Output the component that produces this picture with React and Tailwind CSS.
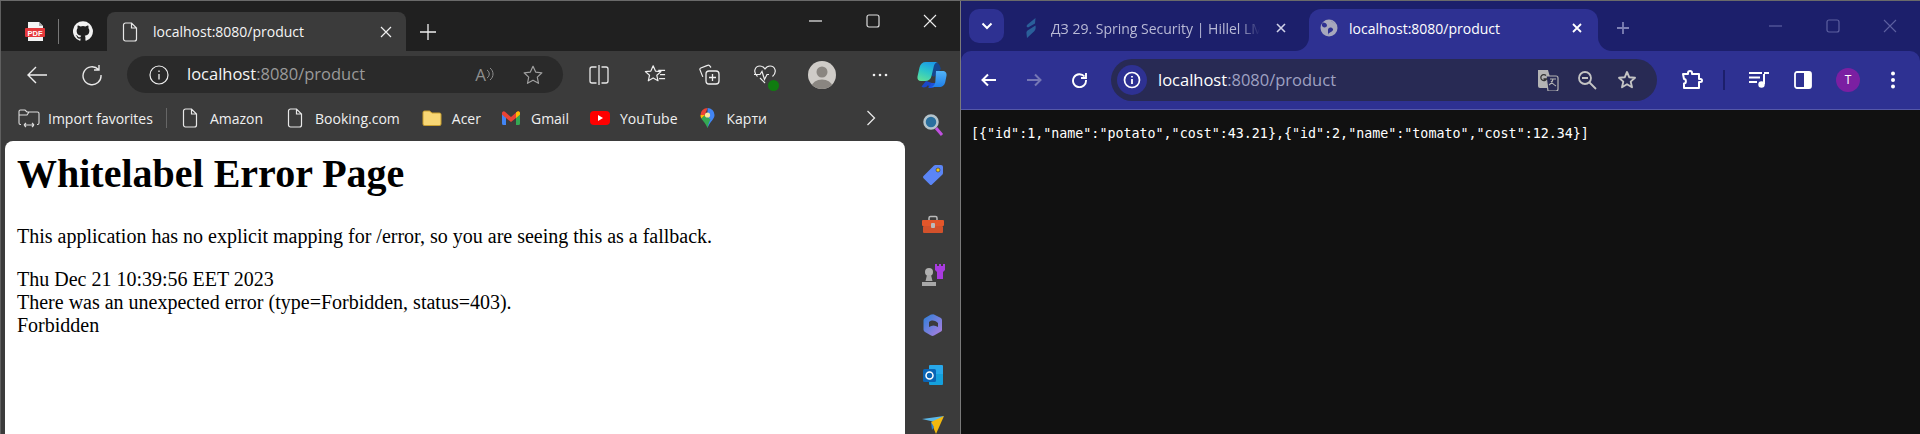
import React from "react";

const ui = { fontFamily: '"Open Sans", "Noto Sans", sans-serif' };

const S = ({ w = 20, h = 20, vb, className = "", children }) => (
  <svg width={w} height={h} viewBox={vb || `0 0 ${w} ${h}`} fill="none" className={"shrink-0 " + className}>{children}</svg>
);

const PageIcon = ({ c = "#e8e8e8" }) => (
  <S w={16} h={20}><path d="M1.500 3a2 2 0 0 1 2-2h6l5 5v11a2 2 0 0 1-2 2h-9a2 2 0 0 1-2-2z M9.500 1v5h5" stroke={c} strokeWidth="1.200" /></S>
);

const GmailIcon = () => (
  <S w={18} h={14}>
    <path d="M0 3v9.500A1.500 1.500 0 0 0 1.500 14H4V6z" fill="#4285f4" />
    <path d="M18 3v9.500a1.500 1.500 0 0 1-1.500 1.500H14V6z" fill="#34a853" />
    <path d="M4 7 0 3.500V2a1.800 1.800 0 0 1 3-1.200L9 6l6-5.200A1.800 1.800 0 0 1 18 2v1.500L14 7l-5 4z" fill="#ea4335" />
    <path d="M14 1.600 15 .8A1.800 1.800 0 0 1 18 2v1.500L14 7z" fill="#fbbc04" />
  </S>
);

const MapsIcon = () => (
  <S w={15} h={20}>
    <path d="M7.500 0A7 7 0 0 1 14.500 7c0 4-4 6-7 13z" fill="#4285f4" />
    <path d="M7.500 20C5.500 15 2.800 13 1.300 10.500L5 7l5.500 4.500C9.500 13.500 8.300 16 7.500 20z" fill="#34a853" />
    <path d="M1.300 10.500A7 7 0 0 1 .5 7L5 7z" fill="#fbbc04" />
    <path d="M.5 7A7 7 0 0 1 7.500 0L5 7z" fill="#ea4335" />
    <circle cx="7.500" cy="7" r="2.600" fill="#fbe6a0" />
  </S>
);

const Bookmark = ({ icon, label, gap = "gap-3", className = "" }) => (
  <div className={`flex items-center ${gap} ${className}`}>
    {icon}
    <span className="text-[14px] text-[#f0f0f0] whitespace-nowrap">{label}</span>
  </div>
);

const SideIcon = ({ children }) => <div className="h-[50px] flex items-center justify-center">{children}</div>;

function EdgeWindow() {
  return (
    <div className="w-[960px] h-[433px] flex flex-col bg-[#3b3b3b] overflow-hidden border-l border-[#5f5f5f]" style={ui}>
      <div className="h-[50px] bg-[#202020] flex items-end shrink-0">
        <div className="h-[50px] flex items-center pl-[24px] pt-[10px]">
          <S w={20} h={19}>
            <path d="M3 0h11l4 4v15H3z" fill="#f4f4f4" />
            <path d="M14 0v4h4z" fill="#aaa" />
            <rect x="0" y="6" width="20" height="9" rx="1" fill="#e5383b" />
            <text x="10" y="13.500" textAnchor="middle" fontSize="7.500" fontWeight="700" fill="#fff" fontFamily="Liberation Sans">PDF</text>
          </S>
          <div className="w-px h-[25px] bg-[#777] ml-[13px] mr-[14px]" />
          <S w={20} h={20} vb="0 0 24 24"><path fill="#f2f2f2" d="M12 .3a12 12 0 0 0-3.800 23.400c.6.100.8-.3.800-.6v-2c-3.300.7-4-1.600-4-1.600-.5-1.400-1.300-1.800-1.300-1.800-1.100-.7.100-.7.100-.7 1.200.1 1.800 1.200 1.800 1.200 1.100 1.800 2.800 1.300 3.500 1 .1-.8.400-1.300.8-1.600-2.700-.3-5.500-1.300-5.500-5.900 0-1.300.5-2.400 1.200-3.200-.1-.3-.5-1.500.1-3.200 0 0 1-.3 3.300 1.200a11.500 11.500 0 0 1 6 0c2.300-1.500 3.300-1.200 3.300-1.200.6 1.700.2 2.900.1 3.200.8.800 1.200 1.900 1.200 3.200 0 4.600-2.800 5.600-5.500 5.900.4.400.8 1.100.8 2.200v3.300c0 .3.200.7.800.6A12 12 0 0 0 12 .3" /></S>
        </div>
        <div className="ml-[14px] w-[299px] h-[39px] bg-[#3b3b3b] rounded-t-[8px] flex items-center pl-[15px] pr-[14px]">
          <PageIcon />
          <span className="ml-[15px] text-[14px] text-[#f5f5f5] whitespace-nowrap">localhost:8080/product</span>
          <S w={12} h={12} className="ml-auto"><path d="M1 1l10 10M11 1 1 11" stroke="#f0f0f0" strokeWidth="1.200" /></S>
        </div>
        <div className="h-[50px] flex items-center pl-[13px] pt-[11px]">
          <S w={18} h={18}><path d="M9 1v16M1 9h16" stroke="#eee" strokeWidth="1.300" /></S>
        </div>
        <div className="ml-auto h-[50px] flex items-center pb-[11px] pr-[23px]">
          <S w={14} h={14}><path d="M0 7h13" stroke="#eee" strokeWidth="1.200" /></S>
          <S w={14} h={14} className="ml-[43px]"><rect x="1" y="1" width="12" height="12" rx="2" stroke="#ddd" strokeWidth="1.200" /></S>
          <S w={14} h={14} className="ml-[43px]"><path d="M1 1l12 12M13 1 1 13" stroke="#eee" strokeWidth="1.100" /></S>
        </div>
      </div>

      <div className="h-[47px] shrink-0 flex items-center pl-[25px]">
        <S w={22} h={20}><path d="M21 10H2M10 2l-8 8 8 8" stroke="#eee" strokeWidth="1.400" /></S>
        <S w={22} h={22} className="ml-[33px]"><path d="M17.500 5.500A9 9 0 1 0 20 11M18 1v5h-5" stroke="#e8e8e8" strokeWidth="1.400" /></S>
        <div className="ml-[24px] w-[436px] h-[37px] bg-[#2a2a2a] rounded-full flex items-center pl-[22px] pr-[19px]">
          <S w={20} h={20}><circle cx="10" cy="10" r="9" stroke="#eee" strokeWidth="1.200" /><path d="M10 9v5.500M10 5.500v1.500" stroke="#eee" strokeWidth="1.300" /></S>
          <span className="ml-[18px] text-[16.500px] whitespace-nowrap text-[#f5f5f5]">localhost<span className="text-[#9a9a9a]">:8080/product</span></span>
          <span className="ml-auto text-[17px] text-[#8f8f8f] leading-none">A</span>
          <S w={8} h={16} vb="0 0 8 16"><path d="M1 3c3 2 3 6 0 8M4 1c4 3 4 9 0 12" stroke="#8f8f8f" strokeWidth="1" /></S>
          <S w={22} h={22} vb="0 0 24 24" className="ml-[28px]"><path d="M12 2.500l2.900 6.300 6.800.8-5 4.700 1.300 6.800-6-3.400-6 3.400 1.300-6.800-5-4.700 6.800-.8z" stroke="#a0a0a0" strokeWidth="1.300" strokeLinejoin="round" /></S>
        </div>
        <S w={20} h={20} className="ml-[26px]"><path d="M7.500 2H3a2 2 0 0 0-2 2v12a2 2 0 0 0 2 2h4.500M12.500 2H17a2 2 0 0 1 2 2v12a2 2 0 0 1-2 2h-4.500M10 0v20" stroke="#e8e8e8" strokeWidth="1.300" /></S>
        <S w={22} h={22} vb="0 0 24 24" className="ml-[35px]"><path d="M10 2l2.500 5.700 6 .6-4.500 4 1.300 6-5.300-3.100-5.300 3.100 1.300-6-4.500-4 6-.6zM15.500 7H23M17.500 11.500H23M16.500 16H23" stroke="#eee" strokeWidth="1.300" strokeLinejoin="round" /></S>
        <S w={22} h={22} vb="0 0 22 22" className="ml-[33px]"><path d="M12 3.500l-1.500-1.800a1.500 1.500 0 0 0-2-.3L1.800 4a1.500 1.500 0 0 0-.8 1.900l2.800 7" stroke="#eee" strokeWidth="1.200" /><rect x="7" y="7" width="13" height="13" rx="3" stroke="#eee" strokeWidth="1.300" /><path d="M13.500 10v7M10 13.500h7" stroke="#eee" strokeWidth="1.300" /></S>
        <div className="ml-[33px] relative">
          <S w={22} h={22}><path d="M3.500 12.500C-1.500 8 1 2 6 2c2.500 0 4 1.500 5 3 1-1.500 2.500-3 5-3 5 0 7.500 6 2.500 10.500M0 10.500h6l2-3 2.500 8 2.500-5h2" stroke="#eee" strokeWidth="1.200" /><path d="M6 14l5 5" stroke="#eee" strokeWidth="1.200" /></S>
          <span className="absolute right-[-3px] bottom-[-5px] w-[11px] h-[11px] rounded-full bg-[#107c10]" />
        </div>
        <div className="ml-[32px] w-[28px] h-[28px] rounded-full bg-[#cfccc8] flex items-center justify-center overflow-hidden">
          <S w={28} h={28}><circle cx="14" cy="11" r="5.500" fill="#8a8681" /><ellipse cx="14" cy="25" rx="10" ry="6.500" fill="#8a8681" /></S>
        </div>
        <S w={16} h={4} className="ml-[36px]"><circle cx="2" cy="2" r="1.300" fill="#f0f0f0" /><circle cx="8" cy="2" r="1.300" fill="#f0f0f0" /><circle cx="14" cy="2" r="1.300" fill="#f0f0f0" /></S>
        <S w={30} h={28} className="ml-[29px]">
          <defs>
            <linearGradient id="cpA" x1="0.600" y1="0" x2="0.200" y2="1"><stop offset="0" stopColor="#1c9be6" /><stop offset="0.500" stopColor="#2cc6c8" /><stop offset="1" stopColor="#5fe09a" /></linearGradient>
            <linearGradient id="cpB" x1="0.500" y1="0" x2="0.500" y2="1"><stop offset="0" stopColor="#52b4f8" /><stop offset="1" stopColor="#1f7fe8" /></linearGradient>
          </defs>
          <path d="M15 3c3-2.500 6-2 7.500 1L24 8l-7 8-3-2z" fill="#16478f" />
          <path d="M11 24c-2 3-5 3-6.500 1.500L9 20l6 2 2 1c-1 2-2.500 4-4.500 4z" fill="#1b48c8" />
          <path d="M14 22h6c-1 3-3 5-6 5h-3c1.500-1 2.300-3 3-5z" fill="#1d50d8" />
          <path d="M19 10h6.500c2.800 0 4.500 2 4 4.700l-1 5C28 24 25.500 26 22 26h-8c2.500-.6 3.700-2.300 4.300-4.800z" fill="url(#cpB)" />
          <path d="M9 1h12c-2.500.5-3.800 2.200-4.300 4.800L14.500 15c-.7 3.500-3 5-6.500 5H4C1.200 20 0 18 .5 15.500l2-9C3.300 3 5.500 1 9 1z" fill="url(#cpA)" />
        </S>
      </div>

      <div className="h-[43px] shrink-0 flex pl-[17px] pt-[4px] items-start">
        <div className="flex items-center h-[32px] w-full">
          <Bookmark gap="gap-[8px]" label="Import favorites" icon={
            <S w={22} h={20}><path d="M3 16.500H2.500A1.500 1.500 0 0 1 1 15V3.500A1.500 1.500 0 0 1 2.500 2H7l2 2h10.500A1.500 1.500 0 0 1 21 5.500V15a1.500 1.500 0 0 1-1.500 1.500H19M1 7h8l2-3M6 17h10M6 17l2-2M6 17l2 2M16 17l-2-2M16 17l-2 2" stroke="#ddd" strokeWidth="1.100" /></S>
          } />
          <div className="w-px h-[20px] bg-[#666] ml-[13px] mr-[15px]" />
          <Bookmark icon={<PageIcon />} label="Amazon" />
          <Bookmark className="ml-[24px]" icon={<PageIcon />} label="Booking.com" />
          <Bookmark gap="gap-[10px]" className="ml-[22px]" label="Acer" icon={
            <S w={20} h={16}><path d="M1 2.500A1.500 1.500 0 0 1 2.500 1h5L10 3h7.500A1.500 1.500 0 0 1 19 4.500V14a1.500 1.500 0 0 1-1.500 1.500h-15A1.500 1.500 0 0 1 1 14z" fill="#f8d775" stroke="#c99f2f" /></S>
          } />
          <Bookmark gap="gap-[11px]" className="ml-[21px]" label="Gmail" icon={<GmailIcon />} />
          <Bookmark gap="gap-[10px]" className="ml-[21px]" label="YouTube" icon={
            <S w={20} h={14}><rect width="20" height="14" rx="4" fill="#f00" /><path d="M8 4l5 3-5 3z" fill="#fff" /></S>
          } />
          <Bookmark gap="gap-[12px]" className="ml-[22px]" label="Карти" icon={<MapsIcon />} />
          <S w={10} h={16} className="ml-[99px]"><path d="M1.500 1l7 7-7 7" stroke="#e8e8e8" strokeWidth="1.300" /></S>
        </div>
      </div>

      <div className="flex-1 min-h-0 flex items-start">
        <div className="ml-[4px] w-[900px] h-[295px] bg-white rounded-t-[8px] pl-[12px] text-black overflow-hidden shrink-0" style={{ fontFamily: '"Liberation Serif", serif' }}>
          <h1 className="text-[40px] leading-[46px] font-bold mt-[10px]">Whitelabel Error Page</h1>
          <p className="text-[20px] leading-[23px] mt-[28px]">This application has no explicit mapping for /error, so you are seeing this as a fallback.</p>
          <div className="text-[20px] leading-[23px] mt-[20px]">
            <div>Thu Dec 21 10:39:56 EET 2023</div>
            <div>There was an unexpected error (type=Forbidden, status=403).</div>
            <div>Forbidden</div>
          </div>
        </div>
        <div className="flex-1 -mt-[41px] flex flex-col items-center">
          <SideIcon>
            <S w={22} h={24}><circle cx="9" cy="9" r="6.500" fill="#2a6f9e" stroke="#b4c4cc" strokeWidth="2.500" /><path d="M14 15l6 7" stroke="#c050e0" strokeWidth="3" /></S>
          </SideIcon>
          <SideIcon>
            <S w={22} h={22}><path d="M1.500 12 12 1.500a2 2 0 0 1 1.400-.5H19a2 2 0 0 1 2 2v6a2 2 0 0 1-.5 1.400L10 20.500a1.500 1.500 0 0 1-2.200 0l-6.300-6.300a1.500 1.500 0 0 1 0-2.200z" fill="#5b85f5" /><circle cx="16" cy="6" r="2" fill="#f2c811" stroke="#333" strokeWidth=".6" /></S>
          </SideIcon>
          <SideIcon>
            <S w={24} h={20}><path d="M8 5V3a1.500 1.500 0 0 1 1.500-1.500h5A1.500 1.500 0 0 1 16 3v2" stroke="#bbb" strokeWidth="1.500" /><rect x="1" y="5" width="22" height="6" rx="1" fill="#e3562a" /><rect x="2" y="11" width="20" height="7" rx="1" fill="#d2512b" /><rect x="10" y="8" width="4" height="5" rx="1" fill="#bbb" /></S>
          </SideIcon>
          <SideIcon>
            <S w={24} h={24}><path d="M14 1h2v2h2V1h2v2h2V1h2v6l-2 2v7h-6V9l-2-2z" fill="#a93be0" /><circle cx="8" cy="9" r="4" fill="#b0b0b0" /><path d="M6 12h4l1.500 6h-7zM1 19h14v4H1z" fill="#a8a8a8" /></S>
          </SideIcon>
          <SideIcon>
            <S w={22} h={24}>
              <defs><linearGradient id="m3" x1="0" y1="0" x2="1" y2="1"><stop offset="0" stopColor="#2b7fd8" /><stop offset="1" stopColor="#b27fe0" /></linearGradient></defs>
              <path d="M9 1.500 3 5a3 3 0 0 0-1.500 2.500v9A3 3 0 0 0 3 19l6 3.500a3 3 0 0 0 3 0l7-4a2 2 0 0 0 1-1.500V7a3 3 0 0 0-1-2l-7-3.500a3 3 0 0 0-2 0z" fill="url(#m3)" />
              <path d="M7 9c3-2 5-2 9 1v4c-3-2-6-2-9 0z" fill="#3b3b3b" />
            </S>
          </SideIcon>
          <SideIcon>
            <S w={22} h={22}><rect x="7" y="1" width="14" height="10" rx="1" fill="#28a8ea" /><path d="M7 10h14v10a1 1 0 0 1-1 1H8a1 1 0 0 1-1-1z" fill="#14a0dc" /><rect x="1" y="5" width="13" height="13" rx="1.500" fill="#0a64b4" /><circle cx="7.500" cy="11.500" r="3.500" stroke="#fff" strokeWidth="1.500" /></S>
          </SideIcon>
          <SideIcon>
            <S w={22} h={18}><path d="M0 3 22 0 13 6z" fill="#5cb8e8" /><path d="M22 0 9 6l5 12z" fill="#f2b90f" /><path d="M9 6l1 8 2-3z" fill="#2a80d0" /></S>
          </SideIcon>
        </div>
      </div>
    </div>
  );
}

function ChromeWindow() {
  return (
    <div className="flex-1 h-[433px] flex flex-col bg-[#111111] overflow-hidden" style={ui}>
      <div className="h-[50px] bg-[#1c1f6b] shrink-0 flex items-end">
        <div className="h-[50px] flex items-start pt-[8px] pl-[8px]">
          <div className="w-[35px] h-[34px] rounded-[10px] bg-[#2e3192] flex items-center justify-center">
            <S w={12} h={8}><path d="M1.500 1.500 6 6l4.500-4.500" stroke="#fff" strokeWidth="2" /></S>
          </div>
        </div>
        <div className="h-[50px] w-[305px] shrink-0 flex items-center pl-[21px] pt-[4px] pr-[10px]">
          <S w={12} h={22}><path d="M10.500 1 2.500 7.500C1 9 1.500 10 3 10.500L10 6.500zM10.500 8.500 2.500 13.500c-1.500 1.500-1 3-1 3L2 21l7-6.500c1.500-1.500 2-3 1.500-6z" fill="#2a5f9a" /></S>
          <span className="ml-[14px] text-[14px] text-[#b9bad6] whitespace-nowrap w-[209px] overflow-hidden" style={{ maskImage: "linear-gradient(to right, #000 90%, transparent)" }}>ДЗ 29. Spring Security | Hillel LMS</span>
          <S w={10} h={10} className="ml-[16px]"><path d="M1 1l8 8M9 1 1 9" stroke="#d0d1e8" strokeWidth="1.600" /></S>
        </div>
        <div className="relative w-[289px] shrink-0 h-[42px] bg-[#2e3192] rounded-t-[12px] flex items-center pl-[11px] pb-[4px]">
          <span className="absolute left-[-14px] bottom-0 w-[14px] h-[14px] bg-[#2e3192]"><span className="block w-full h-full bg-[#1c1f6b] rounded-br-[14px]" /></span>
          <span className="absolute right-[-14px] bottom-0 w-[14px] h-[14px] bg-[#2e3192]"><span className="block w-full h-full bg-[#1c1f6b] rounded-bl-[14px]" /></span>
          <S w={18} h={18}><circle cx="9" cy="9" r="8.500" fill="#a7a8bd" /><path d="M3 3.500c2 0 4 1 4 3S4 9 3 8 1 6 3 3.500zM8 17c0-3 1-3 3-4s3-3 1-4-4 0-4 2 0 4 0 6zM11 1c1 2 2 3 4 3.500L12 3z" fill="#2e3192" /></S>
          <span className="ml-[11px] text-[14px] text-white whitespace-nowrap">localhost:8080/product</span>
          <S w={10} h={10} className="ml-[72px]"><path d="M1 1l8 8M9 1 1 9" stroke="#fff" strokeWidth="1.800" /></S>
        </div>
        <div className="h-[50px] flex items-center pl-[18px] pt-[4px]">
          <S w={14} h={14}><path d="M7 1v12M1 7h12" stroke="#7f81b5" strokeWidth="1.800" /></S>
        </div>
        <div className="ml-auto h-[50px] flex items-center pr-[23px]">
          <S w={14} h={14}><path d="M0 7h13" stroke="#5d60a0" strokeWidth="1.200" /></S>
          <S w={14} h={14} className="ml-[43px]"><rect x="1" y="1" width="12" height="12" rx="2" stroke="#5d60a0" strokeWidth="1.200" /></S>
          <S w={14} h={14} className="ml-[43px]"><path d="M1 1l12 12M13 1 1 13" stroke="#5d60a0" strokeWidth="1.100" /></S>
        </div>
      </div>

      <div className="bg-[#1c1f6b] shrink-0">
        <div className="h-[59px] bg-[#2e3192] border-b border-[#5558a8] flex items-center pl-[20px] rounded-t-[10px]">
          <S w={16} h={14}><path d="M15 7H2M7 1.500 1.500 7 7 12.500" stroke="#fff" strokeWidth="2" /></S>
          <S w={16} h={14} className="ml-[29px]"><path d="M1 7h13M9 1.500 14.500 7 9 12.500" stroke="#7577b5" strokeWidth="2" /></S>
          <S w={16} h={16} className="ml-[29px]"><path d="M13.500 4.500A6.500 6.500 0 1 0 15 8M15 1v5h-5" stroke="#fff" strokeWidth="1.900" /></S>
          <div className="ml-[24px] w-[546px] h-[42px] rounded-full bg-[#282a54] flex items-center pl-[6px] pr-[20px]">
            <div className="w-[30px] h-[30px] rounded-full bg-[#2e3192] flex items-center justify-center">
              <S w={18} h={18}><circle cx="9" cy="9" r="7.500" stroke="#fff" strokeWidth="1.700" /><path d="M9 8v5M9 5v1.500" stroke="#fff" strokeWidth="1.800" /></S>
            </div>
            <span className="ml-[11px] text-[16.500px] text-white whitespace-nowrap">localhost<span className="text-[#9fa1c2]">:8080/product</span></span>
            <S w={22} h={22} className="ml-auto">
              <path d="M1 1h10l5 18H3a2 2 0 0 1-2-2z" fill="#b4b4b4" />
              <path d="M9 7h10a2 2 0 0 1 2 2v11a2 2 0 0 1-2 2h-8z" fill="#282a54" stroke="#b4b4b4" strokeWidth="1.200" />
              <path d="M13 10h6M16 10c-.5 3-2 5-4 6M14 12c1 2 3 4 5 5" stroke="#b4b4b4" strokeWidth="1.100" />
              <path d="M9 6.500A3 3 0 1 0 9.500 10H6.500" stroke="#333" strokeWidth="1.300" />
            </S>
            <S w={20} h={20} className="ml-[18px]"><circle cx="8" cy="8" r="6" stroke="#c4c4c4" strokeWidth="1.800" /><path d="M5 8h6M12.500 12.500 19 19" stroke="#c4c4c4" strokeWidth="1.800" /></S>
            <S w={20} h={20} className="ml-[20px]"><path d="M10 2l2.300 5.300 5.700.5-4.300 3.800 1.300 5.600-5-3-5 3 1.300-5.600L2 7.800l5.700-.5z" stroke="#c4c4c4" strokeWidth="1.900" strokeLinejoin="round" /></S>
          </div>
          <S w={22} h={20} className="ml-[24px]"><path d="M2 4h5V3a2 2 0 0 1 4 0v1h7v5h1.500a1.500 1.500 0 0 1 0 3H18v6H3v-4.500c2.500 0 2.500-4.500 0-4.500z" stroke="#fff" strokeWidth="2" strokeLinejoin="round" /></S>
          <div className="ml-[20px] w-[2px] h-[20px] bg-[#1c1f6b]" />
          <S w={20} h={18} className="ml-[24px]"><path d="M0 2h13M0 6.500h11M0 11h8" stroke="#fff" strokeWidth="2" /><path d="M15 3v10" stroke="#fff" strokeWidth="2" /><path d="M15 2h5" stroke="#fff" strokeWidth="2" /><circle cx="12.500" cy="13.500" r="3.200" fill="#fff" /></S>
          <S w={18} h={18} className="ml-[25px]"><rect x="1" y="1" width="16" height="16" rx="2" stroke="#fff" strokeWidth="1.800" /><rect x="10" y="1" width="7" height="16" fill="#fff" /></S>
          <div className="ml-[24px] w-[24px] h-[24px] rounded-full bg-[#7b1fa2] flex items-center justify-center text-white text-[12px]">T</div>
          <S w={6} h={18} className="ml-[30px]"><circle cx="3" cy="2.500" r="2" fill="#fff" /><circle cx="3" cy="9" r="2" fill="#fff" /><circle cx="3" cy="15.500" r="2" fill="#fff" /></S>
        </div>
      </div>

      <pre className="m-0 pl-[10px] pt-[15px] text-[13.330px] leading-[18px] text-white" style={{ fontFamily: '"DejaVu Sans Mono", monospace' }}>{'[{"id":1,"name":"potato","cost":43.21},{"id":2,"name":"tomato","cost":12.34}]'}</pre>
    </div>
  );
}

export default function App() {
  return (
    <div className="w-[1920px] h-[434px] bg-[#111] overflow-hidden">
      <div className="h-px bg-[#6a6a6a]" />
      <div className="flex">
        <EdgeWindow />
        <div className="w-px h-[433px] bg-[#7a7a7a] shrink-0" />
        <ChromeWindow />
      </div>
    </div>
  );
}
